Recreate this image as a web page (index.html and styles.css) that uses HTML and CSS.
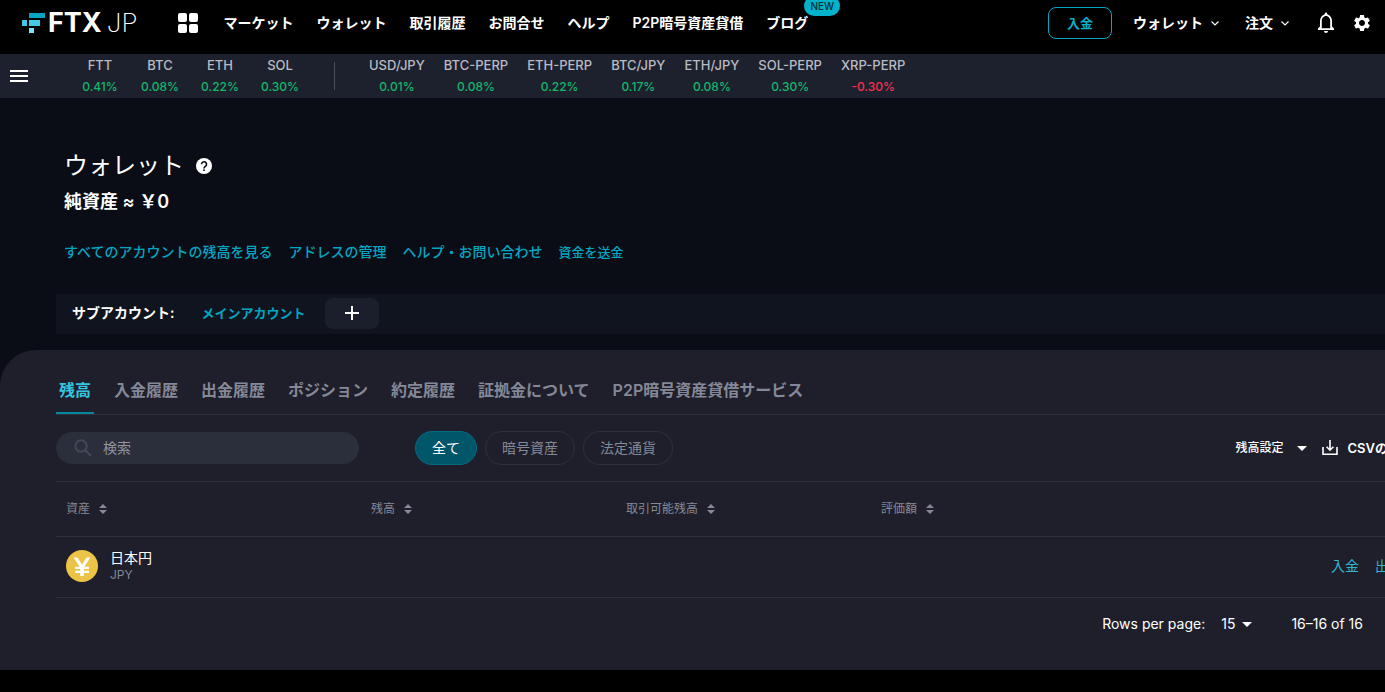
FILE: index.html
```html
<!DOCTYPE html>
<html lang="ja">
<head>
<meta charset="utf-8">
<meta name="viewport" content="width=device-width, initial-scale=1">
<title>FTX JP ウォレット</title>
<link rel="stylesheet" href="styles.css">
</head>
<body>
<header class="topbar">
  <a class="logo" href="#">
    <svg class="logo-mark" viewBox="0 0 23 20" aria-hidden="true"><path fill="#02a6c2" d="M7 0h16v5H7z"/><path fill="#45c8e4" d="M0 7h5v6H0zM7 7h11v6H7z"/><path fill="#7ce2f5" d="M7 15h5v5H7z"/></svg>
    <span class="logo-ftx">FTX</span><span class="logo-jp">JP</span>
  </a>
  <button class="icon-btn apps" aria-label="アプリ">
    <svg width="20" height="20" viewBox="0 0 20 20" fill="#fff"><rect width="9" height="9" rx="2"/><rect x="11" width="9" height="9" rx="2"/><rect y="11" width="9" height="9" rx="2"/><rect x="11" y="11" width="9" height="9" rx="2"/></svg>
  </button>
  <nav class="nav">
    <a href="#">マーケット</a>
    <a href="#">ウォレット</a>
    <a href="#">取引履歴</a>
    <a href="#">お問合せ</a>
    <a href="#">ヘルプ</a>
    <a href="#">P2P暗号資産貸借</a>
    <a class="with-badge" href="#">ブログ<span class="badge">NEW</span></a>
  </nav>
  <div class="actions">
    <button class="deposit">入金</button>
    <button class="menu">ウォレット<svg width="8" height="5" viewBox="0 0 8 5"><path d="M.5.5 4 4 7.500.5" fill="none" stroke="#fff" stroke-width="1.200"/></svg></button>
    <button class="menu">注文<svg width="8" height="5" viewBox="0 0 8 5"><path d="M.5.5 4 4 7.500.5" fill="none" stroke="#fff" stroke-width="1.200"/></svg></button>
    <button class="icon-btn bell" aria-label="通知">
      <svg width="22" height="24" viewBox="1 0 22 24" fill="#fff"><path d="M10 20h4c0 1.100-.9 2-2 2s-2-.9-2-2zm10-2.500V19H4v-1.500l2-2V10c0-3.100 2-5.900 4.700-6.700V3c0-.8.6-1.500 1.300-1.500s1.300.7 1.300 1.500v.3C16 4.100 18 6.900 18 10v5.500l2 2zM16.200 10c0-2.800-1.700-5.100-4.200-5.100S7.800 7.200 7.800 10v7.200h8.400V10z"/></svg>
    </button>
    <button class="icon-btn gear" aria-label="設定">
      <svg width="20" height="20" viewBox="0 0 24 24" fill="#fff"><path d="M19.140 12.940c.04-.3.060-.61.060-.94 0-.32-.02-.64-.07-.94l2.030-1.580a.49.490 0 0 0 .12-.61l-1.920-3.320a.488.488 0 0 0-.59-.22l-2.390.96c-.5-.38-1.030-.7-1.620-.94l-.36-2.540a.484.484 0 0 0-.48-.41h-3.840c-.24 0-.43.170-.47.410l-.36 2.540c-.59.240-1.130.570-1.620.940l-2.390-.96c-.22-.08-.47 0-.59.220L2.740 8.870c-.12.210-.08.470.12.610l2.030 1.580c-.05.3-.09.630-.09.940s.02.640.070.940l-2.030 1.580a.49.490 0 0 0-.12.610l1.920 3.320c.12.220.37.290.59.220l2.390-.96c.5.380 1.030.7 1.620.940l.36 2.540c.05.240.240.410.480.410h3.840c.24 0 .440-.17.470-.41l.36-2.540c.59-.24 1.130-.56 1.620-.94l2.390.96c.22.080.470 0 .59-.22l1.920-3.320c.12-.22.070-.47-.12-.61l-2.010-1.580zM12 15.600c-1.980 0-3.600-1.620-3.600-3.600s1.620-3.600 3.600-3.600 3.600 1.620 3.600 3.600-1.620 3.600-3.600 3.600z"/></svg>
    </button>
  </div>
</header>

<section class="ticker" aria-label="相場">
  <button class="icon-btn burger" aria-label="メニュー"><svg width="18" height="12" viewBox="0 0 18 12" fill="#fff"><path d="M0 0h18v2H0zM0 5h18v2H0zM0 10h18v2H0z"/></svg></button>
  <ul class="coins">
    <li>FTT<b>0.41%</b></li><li>BTC<b>0.08%</b></li><li>ETH<b>0.22%</b></li><li>SOL<b>0.30%</b></li>
  </ul>
  <ul class="pairs">
    <li>USD/JPY<b>0.01%</b></li><li>BTC-PERP<b>0.08%</b></li><li>ETH-PERP<b>0.22%</b></li><li>BTC/JPY<b>0.17%</b></li><li>ETH/JPY<b>0.08%</b></li><li>SOL-PERP<b>0.30%</b></li><li>XRP-PERP<b class="down">-0.30%</b></li>
  </ul>
</section>

<main>
  <section class="summary">
    <h1>ウォレット
      <svg width="16" height="16" viewBox="0 0 16 16" aria-hidden="true"><circle cx="8" cy="8" r="8" fill="#fff"/><path d="M5.500 6.300a2.500 2.500 0 1 1 4 2C8.500 9 8 9.300 8 10.400" fill="none" stroke="#0a0d15" stroke-width="1.600"/><rect x="7.200" y="11.400" width="1.600" height="1.600" fill="#0a0d15"/></svg>
    </h1>
    <p class="net">純資産 ≈ ￥0</p>
    <div class="links">
      <a href="#">すべてのアカウントの残高を見る</a>
      <a href="#">アドレスの管理</a>
      <a href="#">ヘルプ・お問い合わせ</a>
      <a class="small" href="#">資金を送金</a>
    </div>
  </section>
  <section class="subaccounts">
    <span class="sub-label">サブアカウント:</span>
    <a href="#">メインアカウント</a>
    <button class="add" aria-label="追加"><svg width="14" height="14" viewBox="0 0 14 14"><path d="M7 0v14M0 7h14" stroke="#fff" stroke-width="2"/></svg></button>
  </section>
  <section class="panel">
    <div class="panel-inner">
      <nav class="tabs">
        <a class="active" href="#">残高</a>
        <a href="#">入金履歴</a>
        <a href="#">出金履歴</a>
        <a href="#">ポジション</a>
        <a href="#">約定履歴</a>
        <a href="#">証拠金について</a>
        <a href="#">P2P暗号資産貸借サービス</a>
      </nav>
      <div class="toolbar">
        <label class="search">
          <svg width="18" height="18" viewBox="0 0 18 18" fill="none" stroke="#454859" stroke-width="2" aria-hidden="true"><circle cx="7" cy="7" r="5.700"/><path d="m11 11 6 6"/></svg>
          <input type="text" placeholder="検索" aria-label="検索">
        </label>
        <div class="chips">
          <button class="chip on">全て</button>
          <button class="chip">暗号資産</button>
          <button class="chip">法定通貨</button>
        </div>
        <div class="tools">
          <button class="tool">残高設定<svg class="caret" width="10" height="5" viewBox="0 0 10 5"><path d="M0 0h10L5 5z" fill="#fff"/></svg></button>
          <button class="tool csv"><svg width="16" height="16" viewBox="0 0 16 16" fill="none" stroke="#fff" stroke-width="1.600"><path d="M1 7v7.200h14V7M8 0v10M4.600 6.800 8 10.200l3.400-3.400"/></svg>CSVの</button>
        </div>
      </div>
      <table class="balances">
        <thead>
          <tr>
            <th class="asset">資産<svg class="sort" width="8" height="10" viewBox="0 0 8 10"><path d="M4 0l4 4H0zM0 6h8L4 10z" fill="#858897"/></svg></th>
            <th>残高<svg class="sort" width="8" height="10" viewBox="0 0 8 10"><path d="M4 0l4 4H0zM0 6h8L4 10z" fill="#858897"/></svg></th>
            <th>取引可能残高<svg class="sort" width="8" height="10" viewBox="0 0 8 10"><path d="M4 0l4 4H0zM0 6h8L4 10z" fill="#858897"/></svg></th>
            <th>評価額<svg class="sort" width="8" height="10" viewBox="0 0 8 10"><path d="M4 0l4 4H0zM0 6h8L4 10z" fill="#858897"/></svg></th>
            <th class="ops"></th>
          </tr>
        </thead>
        <tbody>
          <tr>
            <td>
              <div class="coin">
                <svg width="32" height="32" viewBox="0 0 32 32" aria-hidden="true"><circle cx="16" cy="16" r="16" fill="#ebc447"/><path d="M7.600 7.500h3.900l4.500 7.300 4.500-7.300h3.900l-6 9.300h4.500v2.300h-5.100v1.700h5.100v2.300h-5.100V26h-3.600v-2.900H9.100v-2.300h5.100v-1.700H9.100v-2.300h4.500z" fill="#fff"/></svg>
                <div><div class="coin-name">日本円</div><div class="coin-code">JPY</div></div>
              </div>
            </td>
            <td></td><td></td><td></td>
            <td class="ops"><div class="row-links"><a href="#">入金</a><a href="#">出金</a></div></td>
          </tr>
        </tbody>
      </table>
      <div class="pager">
        <span>Rows per page:</span>
        <button class="rows">15<svg width="10" height="5" viewBox="0 0 10 5"><path d="M0 0h10L5 5z" fill="#fff"/></svg></button>
        <span class="range">16–16 of 16</span>
      </div>
    </div>
  </section>
</main>
</body>
</html>
```
FILE: styles.css
```css
* { box-sizing: border-box; }
body {
  margin: 0;
  background: #000;
  color: #fff;
  font: 400 14px/20px Inter, "Noto Sans CJK JP", sans-serif;
}
a { color: inherit; text-decoration: none; white-space: nowrap; }
button {
  font: inherit;
  color: inherit;
  background: none;
  border: 0;
  padding: 0;
  white-space: nowrap;
}
svg { display: block; flex: none; }
ul { list-style: none; margin: 0; padding: 0; }

.topbar {
  display: flex;
  align-items: center;
  height: 54px;
  padding: 0 13px 8px 22px;
  font-weight: 600;
}
.logo { display: flex; align-items: center; }
.logo-mark { width: 23px; height: 20px; margin-right: 3px; }
.logo-ftx { font-size: 27px; line-height: 28px; font-weight: 700; }
.logo-jp { font-size: 26px; line-height: 28px; font-weight: 200; margin-left: 5px; }
.apps { margin-left: 41px; }
.nav { display: flex; gap: 23px; margin-left: 25px; }
.with-badge { position: relative; }
.badge {
  position: absolute;
  left: 38px;
  top: -17px;
  width: 36px;
  height: 20px;
  border-radius: 10px;
  background: #02b1ca;
  color: #05303a;
  font: 500 10px/20px Inter, sans-serif;
  text-align: center;
}
.actions { display: flex; align-items: center; margin-left: auto; }
.deposit {
  width: 64px;
  height: 32px;
  margin-right: 21px;
  border: 1px solid #02a6c2;
  border-radius: 8px;
  color: #02b1ca;
  font-size: 13px;
}
.menu { display: flex; align-items: center; gap: 8px; margin-right: 26px; }
.bell { margin-right: 15px; }

.ticker {
  display: flex;
  align-items: center;
  height: 44px;
  padding-left: 10px;
  background: #1d212e;
  color: #b9bbc2;
  font-size: 13px;
  line-height: 21px;
  font-weight: 500;
  text-align: center;
}
.ticker b { display: block; color: #12b76a; font-size: 12px; font-weight: 500; }
.ticker .down { color: #f5304f; }
.coins { display: flex; padding-right: 24px; margin-left: 42px; }
.coins li { width: 60px; }
.pairs { display: flex; gap: 19px; align-items: center; }
.pairs::before { content: ""; width: 1px; height: 28px; margin-right: 15px; background: #4b4e58; }

main { background: #0a0d15; overflow: hidden; }
.summary { padding: 52px 0 0 64px; }
h1 {
  display: flex;
  align-items: center;
  gap: 12px;
  margin: 0;
  font-size: 24px;
  line-height: 32px;
  font-weight: 400;
}
.net { margin: 8px 0 0; font-size: 18px; line-height: 24px; font-weight: 600; }
.links { display: flex; gap: 16px; margin-top: 28px; color: #02a6c2; font-weight: 500; }
.links .small { font-size: 13px; }
.subaccounts {
  display: flex;
  align-items: center;
  height: 40px;
  margin: 32px 0 16px 56px;
  padding: 0 0 2px 16px;
  background: #0f141f;
  color: #02a6c2;
  font-size: 13px;
  font-weight: 600;
}
.sub-label { margin-right: 27px; color: #fff; font-size: 14px; }
.add {
  display: grid;
  place-items: center;
  width: 54px;
  height: 31px;
  margin-left: 20px;
  border-radius: 8px;
  background: #1b1f2b;
}

.panel {
  padding: 24px 0 36px 56px;
  border-top-left-radius: 36px;
  background: #1e1f2a;
}
.panel-inner { margin-right: -24px; }
.tabs {
  display: flex;
  gap: 23px;
  padding-left: 3px;
  border-bottom: 1px solid #2e303d;
  color: #858897;
  font-size: 16px;
  line-height: 32px;
  font-weight: 600;
}
.tabs a { padding-bottom: 8px; }
.tabs .active {
  margin: 0 -3px;
  padding: 0 3px 6px;
  border-bottom: 2px solid #0288a0;
  color: #36c5e0;
}
.toolbar {
  display: flex;
  align-items: center;
  height: 67px;
  border-bottom: 1px solid #2e303d;
}
.search {
  display: flex;
  align-items: center;
  gap: 11px;
  width: 303px;
  height: 32px;
  padding: 0 18px;
  border-radius: 16px;
  background: #2b2e3b;
}
.search input {
  flex: 1;
  min-width: 0;
  padding: 0;
  border: 0;
  outline: 0;
  background: none;
  color: #fff;
  font: inherit;
}
.search input::placeholder { color: #92949f; opacity: 1; }
.chips { display: flex; gap: 8px; margin-left: 56px; }
.chip {
  height: 34px;
  padding: 0 16px;
  border: 1px solid #2e303d;
  border-radius: 17px;
  color: #858897;
}
.chip.on { background: #02566a; border-color: #026a80; color: #fff; }
.tools { display: flex; gap: 15px; margin-left: auto; padding-right: 21px; }
.tool { display: flex; align-items: center; font-size: 12px; font-weight: 500; }
.tool .caret { margin-left: 13px; }
.csv { gap: 10px; font-size: 13px; font-weight: 600; }

.balances { width: 100%; border-collapse: separate; border-spacing: 0; table-layout: fixed; }
.balances th {
  height: 55px;
  padding: 0 10px;
  border-bottom: 1px solid #2e303d;
  color: #858897;
  font-size: 12px;
  font-weight: 400;
  text-align: left;
}
.balances .asset { width: 305px; }
.balances th:not(.asset):not(.ops) { width: 255px; }
.sort { display: inline-block; margin-left: 9px; vertical-align: -1px; }
.balances td { height: 61px; padding: 0 10px 2px; border-bottom: 1px solid #2e303d; }
.balances td.ops { padding-right: 6px; }
.coin { display: flex; align-items: center; gap: 12px; }
.coin-name { line-height: 18px; }
.coin-code { color: #858897; font-size: 12px; line-height: 16px; }
.row-links { display: flex; justify-content: flex-end; gap: 16px; color: #36b5d0; }
.pager {
  display: flex;
  justify-content: flex-end;
  align-items: center;
  padding: 16px 46px 0 0;
}
.rows { display: flex; align-items: center; gap: 7px; margin: 0 39px 0 16px; }
```
